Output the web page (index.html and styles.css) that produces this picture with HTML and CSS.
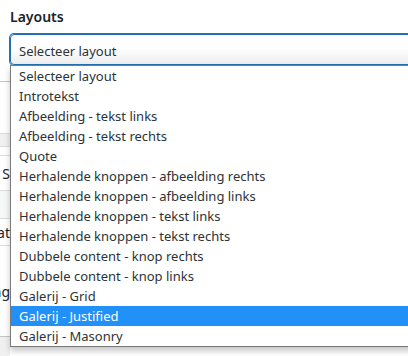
FILE: index.html
```html
<!DOCTYPE html>
<html lang="nl">
<head>
    <meta charset="UTF-8">
    <meta name="viewport" content="width=device-width, initial-scale=1.0">
    <title>Layouts</title>
    <link rel="stylesheet" href="styles.css">
</head>
<body>
    <div class="field">
        <div class="field-label">Layouts</div>
        <div class="select">Selecteer layout</div>

        <ul class="options">
            <li>Selecteer layout</li>
            <li>Introtekst</li>
            <li>Afbeelding - tekst links</li>
            <li>Afbeelding - tekst rechts</li>
            <li>Quote</li>
            <li>Herhalende knoppen - afbeelding rechts</li>
            <li>Herhalende knoppen - afbeelding links</li>
            <li>Herhalende knoppen - tekst links</li>
            <li>Herhalende knoppen - tekst rechts</li>
            <li>Dubbele content - knop rechts</li>
            <li>Dubbele content - knop links</li>
            <li>Galerij - Grid</li>
            <li class="active">Galerij - Justified</li>
            <li>Galerij - Masonry</li>
        </ul>
    </div>

    <div class="backdrop">
        <div class="row row-top"></div>
        <div class="row row-space"></div>
        <div class="row row-band"></div>
        <div class="row row-gap"></div>
        <div class="row row-text"><span>S</span></div>
        <div class="row row-band light"></div>
        <div class="row row-text short"><span>Formaat</span></div>
        <div class="row row-plain"><span>Weergave instelling</span></div>
        <div class="row row-foot"></div>
    </div>
</body>
</html>
```

FILE: styles.css
```css
body {
    margin: 0;
    overflow: hidden;
    height: 100vh;
    background: #fff;
    font-family: "Segoe UI", "Noto Sans", sans-serif;
    color: #2c3338;
}

.field {
    position: relative;
    padding: 7px 0 0 10px;
}

.field-label {
    font-size: 14px;
    font-weight: 600;
    line-height: 20px;
    color: #1d2327;
    margin-bottom: 7px;
}

.select {
    width: 440px;
    height: 27px;
    box-sizing: content-box;
    border: 1px solid #2271b1;
    box-shadow: 0 0 0 1px #2271b1;
    border-radius: 4px;
    margin-top: 1px;
    padding: 2px 8px 0;
    font-size: 13px;
    line-height: 29px;
    background: linear-gradient(#fff 45%, #ededed);
}

.options {
    position: absolute;
    left: 10px;
    top: 65px;
    width: 440px;
    margin: 0;
    padding: 0;
    list-style: none;
    background: #fff;
    border: 1px solid #7a7a7a;
    border-bottom-color: #777;
    box-shadow: 0 4px 6px rgba(0, 0, 0, 0.22);
    z-index: 2;
}

.options li {
    height: 20px;
    line-height: 20px;
    padding-left: 8px;
    font-size: 13px;
    white-space: nowrap;
}

.options li.active {
    background: #2190f8;
    color: #fff;
}

.backdrop {
    width: 10px;
    overflow: hidden;
    font-size: 14px;
    color: #1d2327;
}

.row {
    display: flex;
    justify-content: flex-end;
    align-items: center;
    white-space: nowrap;
}

.row span {
    flex-shrink: 0;
}

.row-top {
    height: 16px;
    border-bottom: 1px solid #c3c4c7;
}

.row-space {
    height: 51px;
}

.row-band {
    height: 12px;
    background: #f0f0f1;
    border-top: 1px solid #dcdcde;
    border-bottom: 1px solid #dcdcde;
}

.row-band.light {
    height: 27px;
    background: #f6f7f7;
    border-top: none;
}

.row-gap {
    height: 8px;
}

.row-text {
    height: 34px;
    border-top: 1px solid #dcdcde;
    border-bottom: 1px solid #dcdcde;
}

.row-text.short {
    height: 26px;
    border-top: none;
}

.row-plain {
    height: 90px;
}

.row-foot {
    height: 20px;
    background: #f0f0f1;
    border-top: 1px solid #c3c4c7;
}
```
